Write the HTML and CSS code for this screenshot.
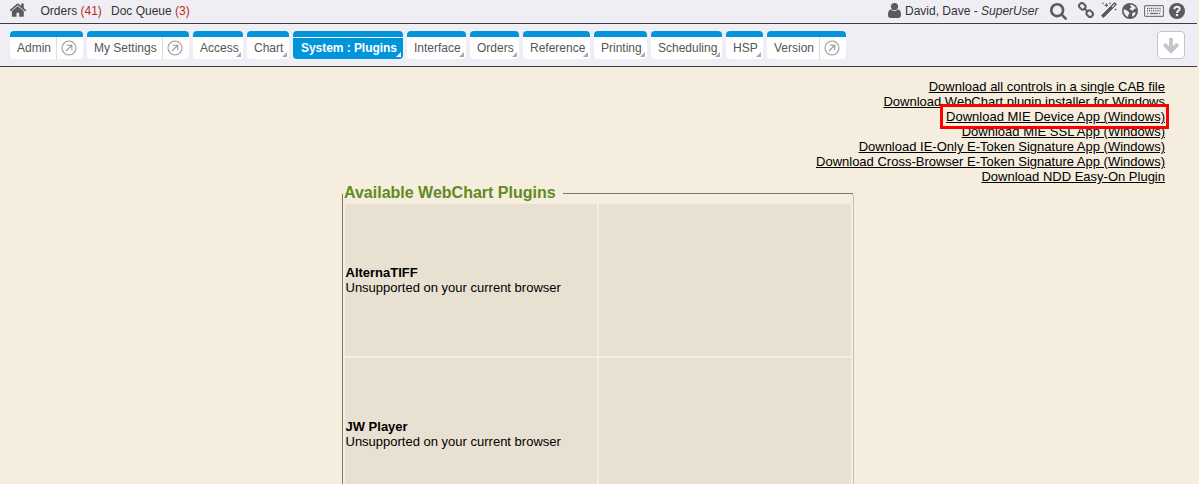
FILE: index.html
```html
<!DOCTYPE html>
<html lang="en">
<head>
<meta charset="utf-8">
<title>WebChart Plugins</title>
<link rel="stylesheet" href="styles.css">
</head>
<body>
<header class="topbar">
  <svg class="home" viewBox="70 220 1652 1320"><path d="M1408 992v480q0 26-19 45t-45 19h-384v-384h-256v384h-384q-26 0-45-19t-19-45v-480q0-1 .5-3t.5-3l575-474 575 474q1 2 1 6zm223-69l-62 74q-8 9-21 11h-3q-13 0-21-7l-692-577-692 577q-12 8-24 7-13-2-21-11l-62-74q-8-10-7-23.5t11-21.5l719-599q32-26 76-26t76 26l244 204v-195q0-14 9-23t23-9h192q14 0 23 9t9 23v408l219 182q10 8 11 21.5t-7 23.5z"/></svg>
  <a class="orders">Orders <span class="count">(41)</span></a>
  <a class="queue">Doc Queue <span class="count">(3)</span></a>
  <div class="user">
    <svg class="person" viewBox="0 0 13 15"><circle cx="6.5" cy="3.6" r="3.6"/><path d="M3 6.2C.7 6.8 0 9 0 12.3 0 14 1 15 2.500 15h8c1.500 0 2.500-1 2.500-2.700 0-3.300-.7-5.500-3-6.100-1 1.200-2.200 1.800-3.500 1.800S4 7.400 3 6.200z"/></svg>
    <span class="name">David, Dave - <i>SuperUser</i></span>
  </div>
  <div class="tools">
    <svg class="search" viewBox="64 128 1664 1664"><path d="M1216 832q0-185-131.500-316.500t-316.500-131.500-316.500 131.500-131.500 316.500 131.500 316.500 316.500 131.500 316.500-131.500 131.500-316.500zm512 832q0 52-38 90t-90 38q-54 0-90-38l-343-342q-179 124-399 124-143 0-273.500-55.500t-225-150-150-225-55.500-273.500 55.500-273.500 150-225 225-150 273.500-55.500 273.500 55.500 225 150 150 225 55.500 273.500q0 220-124 399l343 343q37 37 37 90z"/></svg>
    <svg class="link" viewBox="0 0 16 16"><g fill="none" stroke="#5b5b5b" stroke-width="2"><rect x="-3.300" y="-2.700" width="6.600" height="5.400" rx="2.400" transform="translate(4.300 4.300) rotate(45)"/><rect x="-3.300" y="-2.700" width="6.600" height="5.400" rx="2.400" transform="translate(11.700 11.700) rotate(45)"/><path d="M6 6l4 4"/></g></svg>
    <svg class="wand" viewBox="0 0 16 16"><path d="M13.600.5l1.900 1.900L2.400 15.500.5 13.600z" stroke="#5b5b5b" stroke-linejoin="round"/><path d="M10.700 4.700l2.700-2.700.7.700-2.700 2.700z" fill="#efeef4"/><path d="M5.500.8l.7 1.700 1.700.7-1.700.7-.7 1.700-.7-1.700-1.700-.7 1.700-.7zM2 0l.4.900.9.400-.9.400-.4.900-.4-.9-.9-.4.900-.4zM9 0l.4.900.9.400-.9.400-.4.900-.4-.9-.9-.4.900-.4zM14.600 6.200l.4.900.9.400-.9.400-.4.900-.4-.9-.9-.4.900-.4z"/></svg>
    <svg class="globe" viewBox="0 0 16 16"><circle cx="8" cy="8" r="8"/><path fill="#efeef4" d="M8.300 1.500l2.300.4 2.600 2 .8 1.700-1.500.2-1 1.500-1.700.4-.8-1.200-1.400.2.300-1.500 1.500-.6-.3-1.400-1.100-.6zM2 6l1.500.9 1.700.6 1.500 1.400 1 1.200-1.300 1.700-.5 2.300C3.500 13 1.700 10.500 1.600 8zM10.500 9.800l2.300-.6 1 .8-1.500 2.500-1.900 1.200-.4-1.700z"/></svg>
    <svg class="keyboard" viewBox="0 0 20 12"><rect x=".6" y=".6" width="18.800" height="10.800" rx="1" fill="#f8f8f8" stroke="#777" stroke-width="1.200"/><path d="M3 3.500h14M3 5.800h14M3 8.500h2M15 8.500h2" fill="none" stroke="#666" stroke-width="1.300" stroke-dasharray="1.200 .7"/><path d="M6 8.500h8" stroke="#666" stroke-width="1.300"/></svg>
    <svg class="help" viewBox="0 0 16 16"><circle cx="8" cy="8" r="8"/><path d="M5.300 6.300C5.300 4.500 6.500 3.700 8 3.700s2.700.9 2.700 2.200C10.700 7.700 8 7.700 8 9.900" fill="none" stroke="#efeef4" stroke-width="2"/><path d="M6.900 11h2.200v2.100H6.900z" fill="#efeef4"/></svg>
  </div>
</header>
<nav class="tabs">
  <a class="tab admin"><span>Admin</span><b class="open"><svg viewBox="0 0 16 16"><circle cx="8" cy="8" r="7"/><path d="M5 11l5.500-5.500M5.800 5.300h5v5"/></svg></b></a>
  <a class="tab settings"><span>My Settings</span><b class="open"><svg viewBox="0 0 16 16"><circle cx="8" cy="8" r="7"/><path d="M5 11l5.500-5.500M5.800 5.300h5v5"/></svg></b></a>
  <a class="tab menu access"><span>Access</span></a>
  <a class="tab menu chart"><span>Chart</span></a>
  <a class="tab menu system active"><span>System : Plugins</span></a>
  <a class="tab menu interface"><span>Interface</span></a>
  <a class="tab menu order-tab"><span>Orders</span></a>
  <a class="tab menu reference"><span>Reference</span></a>
  <a class="tab menu printing"><span>Printing</span></a>
  <a class="tab menu scheduling"><span>Scheduling</span></a>
  <a class="tab menu hsp"><span>HSP</span></a>
  <a class="tab version"><span>Version</span><b class="open"><svg viewBox="0 0 16 16"><circle cx="8" cy="8" r="7"/><path d="M5 11l5.500-5.500M5.800 5.300h5v5"/></svg></b></a>
  <button class="down" aria-label="Expand"><svg viewBox="0 0 16 16"><path d="M8 1.800v11M2 7.300l6 6 6-6"/></svg></button>
</nav>
<main>
  <ul class="downloads">
    <li><a>Download all controls in a single CAB file</a></li>
    <li><a>Download WebChart plugin installer for Windows</a></li>
    <li class="marked"><a>Download MIE Device App (Windows)</a></li>
    <li><a>Download MIE SSL App (Windows)</a></li>
    <li><a>Download IE-Only E-Token Signature App (Windows)</a></li>
    <li><a>Download Cross-Browser E-Token Signature App (Windows)</a></li>
    <li><a>Download NDD Easy-On Plugin</a></li>
  </ul>
  <section class="plugins">
    <div class="legend"><h2>Available WebChart Plugins</h2><div class="rule"></div></div>
    <div class="grid">
      <div class="cell"><strong>AlternaTIFF</strong><span>Unsupported on your current browser</span></div>
      <div class="cell"></div>
      <div class="cell last"><strong>JW Player</strong><span>Unsupported on your current browser</span></div>
      <div class="cell last"></div>
    </div>
  </section>
</main>
</body>
</html>
```
FILE: styles.css
```css
* { box-sizing: border-box; }
html { background: #f5eddd; }
body {
  margin: 0;
  height: 484px;
  overflow: hidden;
  font-family: "Liberation Sans", Arial, sans-serif;
  font-size: 13px;
  color: #000;
  background: #f5eddd;
}
svg { display: block; flex: none; fill: #5b5b5b; }

.topbar, .tabs {
  display: flex;
  width: 1197px;
  background: #efeef4;
  border-bottom: 1px solid #3e3e42;
}
.topbar {
  height: 24px;
  align-items: flex-start;
  padding-left: 10px;
  font-size: 12px;
  line-height: 14px;
  color: #333;
  white-space: nowrap;
}
.topbar a, .name { padding-top: 4px; }
.home { width: 17px; height: 14px; margin-top: 3px; }
.orders { width: 70.5px; margin-left: 13.5px; }
.count { color: #c0281c; }
.user { display: flex; margin-left: auto; }
.person { width: 13px; height: 15px; margin: 3px 4px 0 0; }
.name { width: 145px; }
.tools { display: flex; width: 147px; }
.search { width: 17px; height: 17px; margin: 3px 11px 0 0; }
.link { width: 16px; height: 16px; margin: 2px 7px 0 0; }
.wand { width: 16px; height: 16px; margin: 2px 5px 0 0; }
.globe { width: 16px; height: 16px; margin: 3px 6px 0 0; }
.keyboard { width: 20px; height: 12px; margin: 5px 5px 0 0; }
.help { width: 16px; height: 16px; margin-top: 3px; }

.tabs { height: 43px; padding: 7px 12px 0 10px; gap: 4px; }
.tab {
  position: relative;
  display: flex;
  height: 28px;
  background: #fff;
  border-top: 6px solid #0095db;
  border-radius: 4px;
  font-size: 12px;
  line-height: 22px;
  color: #555;
  white-space: nowrap;
}
.tab span { padding-left: 7px; }
.menu::after {
  content: "";
  position: absolute;
  right: 2px;
  bottom: 2px;
  border-left: 5px solid transparent;
  border-bottom: 5px solid #aaa;
}
.active {
  background: linear-gradient(#fff 1px, #0095db 1px);
  color: #fff;
  font-weight: bold;
}
.active::after { border-bottom-color: #fff; }
.active span { padding-left: 8px; letter-spacing: -0.05px; }
.open {
  width: 27px;
  margin-left: auto;
  padding: 3px 0 0 4px;
  border-left: 1px solid #ddd;
}
.open svg { width: 16px; height: 16px; fill: none; stroke: #999; stroke-width: 1.1; }
.admin { width: 73px; }
.settings { width: 102px; }
.access { width: 50px; }
.chart { width: 42px; }
.system { width: 110px; }
.interface { width: 59px; }
.order-tab { width: 49px; }
.reference { width: 67px; }
.printing { width: 53px; }
.scheduling { width: 71px; }
.hsp { width: 37px; }
.version { width: 79px; }
.down {
  display: grid;
  place-items: center;
  width: 28px;
  height: 28px;
  margin-left: auto;
  padding: 0;
  background: #fff;
  border: 1px solid #c4c4c8;
  border-radius: 4px;
}
.down svg { width: 18px; height: 18px; fill: none; stroke: #c5c5c9; stroke-width: 3.4; }

.downloads {
  margin: 0;
  padding: 12px 34px 0 0;
  list-style: none;
  text-align: right;
  line-height: 15px;
}
.downloads a { position: relative; text-decoration: underline; }
.marked { position: relative; z-index: 1; }
.marked a::before {
  content: "";
  position: absolute;
  z-index: -1;
  inset: -5px -4px -5px -6px;
  background: #f5eddd;
  border: 3px solid #f00;
}

.plugins {
  position: relative;
  width: 512px;
  margin-left: 342px;
}
.plugins::before {
  content: "";
  position: absolute;
  inset: 10px 0 0;
  border-left: 1px solid #777;
  border-right: 1px solid #c2beb4;
  border-top-right-radius: 3px;
}
.legend { display: flex; align-items: center; height: 18px; padding: 0 1px 0 2px; }
h2 { width: 219px; margin: 0; font-size: 16px; line-height: 18px; color: #618a22; }
.rule { flex: 1; height: 1px; margin-top: 1px; background: #777; }
.grid {
  display: grid;
  grid-template-columns: 252px 252px;
  grid-template-rows: 152px 126px;
  gap: 2px;
  padding: 2px 0 0 3px;
}
.cell {
  display: flex;
  flex-direction: column;
  justify-content: center;
  padding-left: 0.5px;
  line-height: 15px;
  background: #e8e1d1;
}
.last { justify-content: flex-start; padding-top: 61px; }
```
